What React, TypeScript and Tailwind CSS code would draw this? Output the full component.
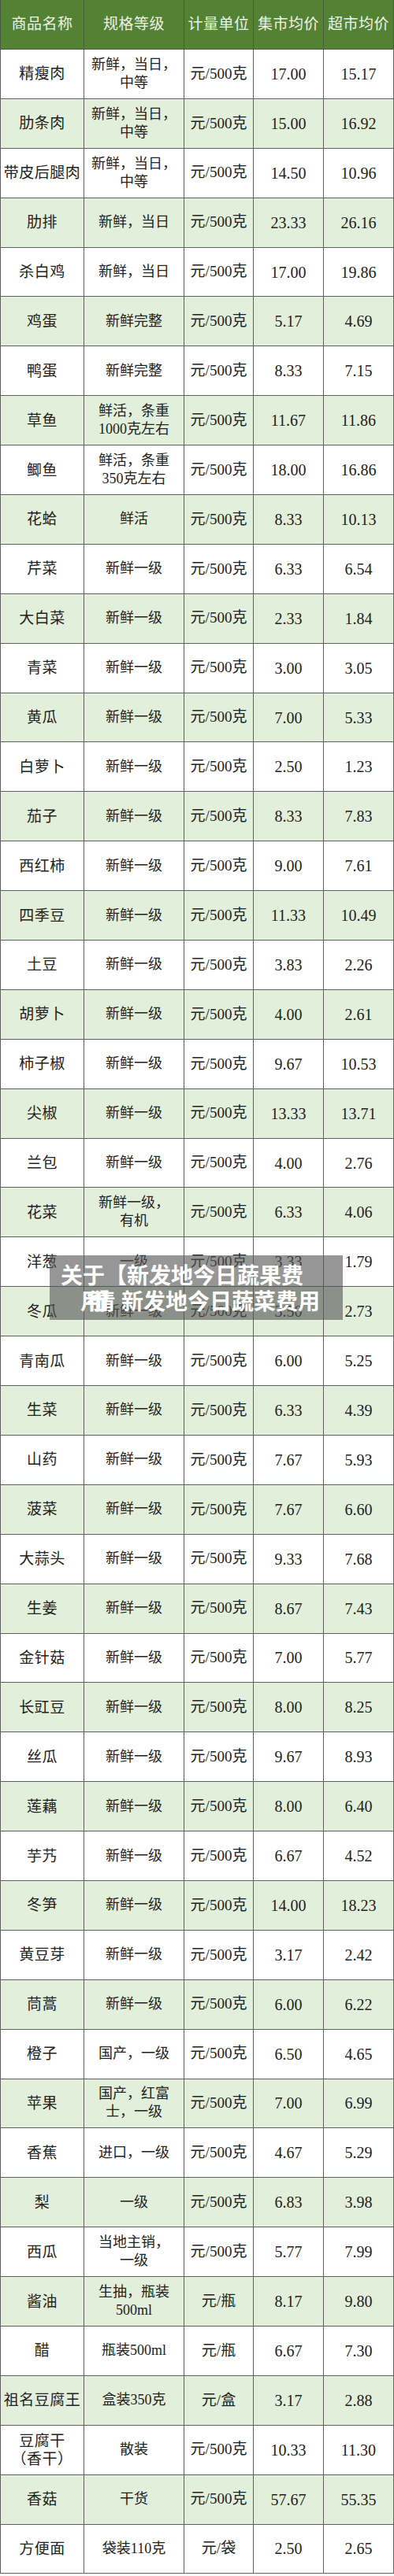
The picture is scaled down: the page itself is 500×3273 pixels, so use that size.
import React from 'react'

type Row = {
    name: string[]
    spec: string[]
    unit: string
    market: string
    super: string
}

const U = '元/500克'

const rows: Row[] = [
    { name: ['精瘦肉'], spec: ['新鲜，当日，', '中等'], unit: U, market: '17.00', super: '15.17' },
    { name: ['肋条肉'], spec: ['新鲜，当日，', '中等'], unit: U, market: '15.00', super: '16.92' },
    { name: ['带皮后腿肉'], spec: ['新鲜，当日，', '中等'], unit: U, market: '14.50', super: '10.96' },
    { name: ['肋排'], spec: ['新鲜，当日'], unit: U, market: '23.33', super: '26.16' },
    { name: ['杀白鸡'], spec: ['新鲜，当日'], unit: U, market: '17.00', super: '19.86' },
    { name: ['鸡蛋'], spec: ['新鲜完整'], unit: U, market: '5.17', super: '4.69' },
    { name: ['鸭蛋'], spec: ['新鲜完整'], unit: U, market: '8.33', super: '7.15' },
    { name: ['草鱼'], spec: ['鲜活，条重', '1000克左右'], unit: U, market: '11.67', super: '11.86' },
    { name: ['鲫鱼'], spec: ['鲜活，条重', '350克左右'], unit: U, market: '18.00', super: '16.86' },
    { name: ['花蛤'], spec: ['鲜活'], unit: U, market: '8.33', super: '10.13' },
    { name: ['芹菜'], spec: ['新鲜一级'], unit: U, market: '6.33', super: '6.54' },
    { name: ['大白菜'], spec: ['新鲜一级'], unit: U, market: '2.33', super: '1.84' },
    { name: ['青菜'], spec: ['新鲜一级'], unit: U, market: '3.00', super: '3.05' },
    { name: ['黄瓜'], spec: ['新鲜一级'], unit: U, market: '7.00', super: '5.33' },
    { name: ['白萝卜'], spec: ['新鲜一级'], unit: U, market: '2.50', super: '1.23' },
    { name: ['茄子'], spec: ['新鲜一级'], unit: U, market: '8.33', super: '7.83' },
    { name: ['西红柿'], spec: ['新鲜一级'], unit: U, market: '9.00', super: '7.61' },
    { name: ['四季豆'], spec: ['新鲜一级'], unit: U, market: '11.33', super: '10.49' },
    { name: ['土豆'], spec: ['新鲜一级'], unit: U, market: '3.83', super: '2.26' },
    { name: ['胡萝卜'], spec: ['新鲜一级'], unit: U, market: '4.00', super: '2.61' },
    { name: ['柿子椒'], spec: ['新鲜一级'], unit: U, market: '9.67', super: '10.53' },
    { name: ['尖椒'], spec: ['新鲜一级'], unit: U, market: '13.33', super: '13.71' },
    { name: ['兰包'], spec: ['新鲜一级'], unit: U, market: '4.00', super: '2.76' },
    { name: ['花菜'], spec: ['新鲜一级，', '有机'], unit: U, market: '6.33', super: '4.06' },
    { name: ['洋葱'], spec: ['一级'], unit: U, market: '3.33', super: '1.79' },
    { name: ['冬瓜'], spec: ['新鲜一级'], unit: U, market: '3.50', super: '2.73' },
    { name: ['青南瓜'], spec: ['新鲜一级'], unit: U, market: '6.00', super: '5.25' },
    { name: ['生菜'], spec: ['新鲜一级'], unit: U, market: '6.33', super: '4.39' },
    { name: ['山药'], spec: ['新鲜一级'], unit: U, market: '7.67', super: '5.93' },
    { name: ['菠菜'], spec: ['新鲜一级'], unit: U, market: '7.67', super: '6.60' },
    { name: ['大蒜头'], spec: ['新鲜一级'], unit: U, market: '9.33', super: '7.68' },
    { name: ['生姜'], spec: ['新鲜一级'], unit: U, market: '8.67', super: '7.43' },
    { name: ['金针菇'], spec: ['新鲜一级'], unit: U, market: '7.00', super: '5.77' },
    { name: ['长豇豆'], spec: ['新鲜一级'], unit: U, market: '8.00', super: '8.25' },
    { name: ['丝瓜'], spec: ['新鲜一级'], unit: U, market: '9.67', super: '8.93' },
    { name: ['莲藕'], spec: ['新鲜一级'], unit: U, market: '8.00', super: '6.40' },
    { name: ['芋艿'], spec: ['新鲜一级'], unit: U, market: '6.67', super: '4.52' },
    { name: ['冬笋'], spec: ['新鲜一级'], unit: U, market: '14.00', super: '18.23' },
    { name: ['黄豆芽'], spec: ['新鲜一级'], unit: U, market: '3.17', super: '2.42' },
    { name: ['茼蒿'], spec: ['新鲜一级'], unit: U, market: '6.00', super: '6.22' },
    { name: ['橙子'], spec: ['国产，一级'], unit: U, market: '6.50', super: '4.65' },
    { name: ['苹果'], spec: ['国产，红富', '士，一级'], unit: U, market: '7.00', super: '6.99' },
    { name: ['香蕉'], spec: ['进口，一级'], unit: U, market: '4.67', super: '5.29' },
    { name: ['梨'], spec: ['一级'], unit: U, market: '6.83', super: '3.98' },
    { name: ['西瓜'], spec: ['当地主销，', '一级'], unit: U, market: '5.77', super: '7.99' },
    { name: ['酱油'], spec: ['生抽，瓶装', '500ml'], unit: '元/瓶', market: '8.17', super: '9.80' },
    { name: ['醋'], spec: ['瓶装500ml'], unit: '元/瓶', market: '6.67', super: '7.30' },
    { name: ['祖名豆腐王'], spec: ['盒装350克'], unit: '元/盒', market: '3.17', super: '2.88' },
    { name: ['豆腐干', '（香干）'], spec: ['散装'], unit: U, market: '10.33', super: '11.30' },
    { name: ['香菇'], spec: ['干货'], unit: U, market: '57.67', super: '55.35' },
    { name: ['方便面'], spec: ['袋装110克'], unit: '元/袋', market: '2.50', super: '2.65' },
]

const headers = ['商品名称', '规格等级', '计量单位', '集市均价', '超市均价']

function Lines({ lines }: { lines: string[] }) {
    return (
        <div className="flex flex-col items-center leading-[23px]">
            {lines.map((l, i) => (
                <span key={i} className="whitespace-nowrap">{l}</span>
            ))}
        </div>
    )
}

export default function App() {
    return (
        <div
            className="relative w-[500px] bg-white text-[#222]"
            style={{ fontFamily: '"Liberation Serif", "Noto Sans CJK SC", serif' }}
        >
            <div className="grid grid-cols-[107px_127px_88px_89px_89px]">
                {headers.map((h, i) => (
                    <div
                        key={h}
                        className={`flex h-[63px] items-center justify-center border-r border-b border-[#4a5a40] bg-[#548235] text-[19px] tracking-[0.5px] text-[#edf3e6] ${i === 0 ? 'border-l' : ''}`}
                    >
                        {h}
                    </div>
                ))}

                {rows.map((r, idx) => {
                    const bg = idx % 2 === 1 ? 'bg-[#e2efda]' : 'bg-white'
                    const cell = `flex h-[62.9px] items-center justify-center border-r border-b border-[#5f5f5f] ${bg}`
                    return (
                        <React.Fragment key={idx}>
                            <div className={`${cell} border-l text-[19px] tracking-[0.5px]`}>
                                <Lines lines={r.name} />
                            </div>
                            <div className={`${cell} text-[18px]`}>
                                <Lines lines={r.spec} />
                            </div>
                            <div className={`${cell} text-[19px]`}>{r.unit}</div>
                            <div className={`${cell} text-[20px]`}>{r.market}</div>
                            <div className={`${cell} text-[20px]`}>{r.super}</div>
                        </React.Fragment>
                    )
                })}
            </div>

            {/* caption overlay sitting on top of the table */}
            <div
                className="absolute left-[63px] top-[1595px] flex h-[82px] w-[372px] flex-col justify-center bg-[rgba(85,85,85,0.62)] pl-[14px] text-[28px] font-bold leading-[33px] text-white"
                style={{ fontFamily: '"Noto Sans CJK SC", sans-serif' }}
            >
                <span className="whitespace-nowrap">关于【新发地今日蔬果费</span>
                <span className="whitespace-nowrap pl-[25px]">
                    <span className="tracking-[-20px]">用行情】</span>
                    <span className="pl-[20px]">新发地今日蔬菜费用</span>
                </span>
            </div>
        </div>
    )
}
